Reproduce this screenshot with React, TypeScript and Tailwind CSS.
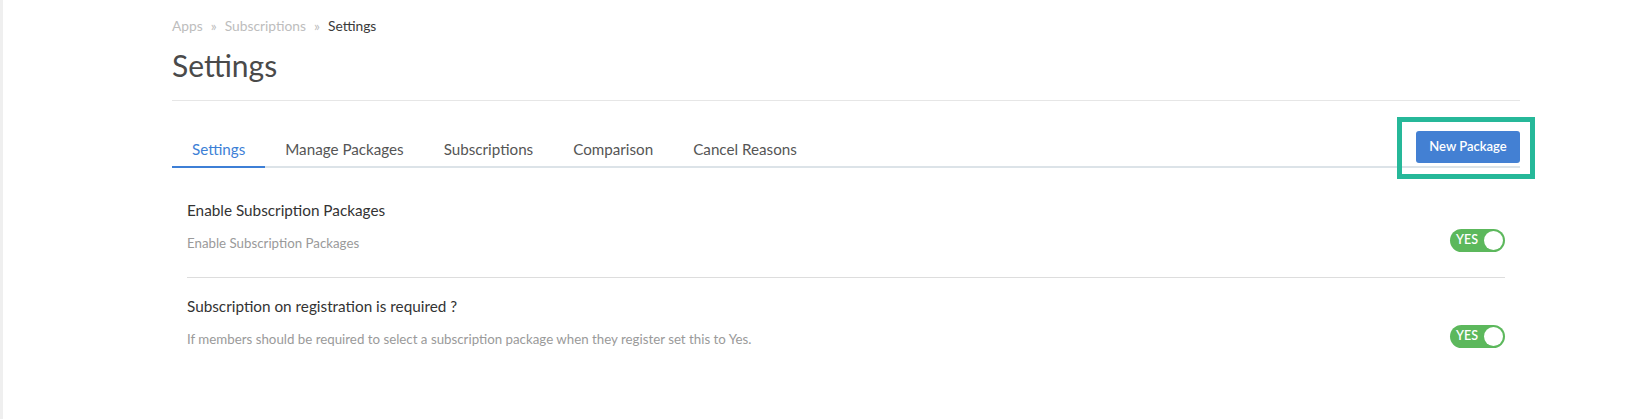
import React from 'react';

const tabs = ['Settings', 'Manage Packages', 'Subscriptions', 'Comparison', 'Cancel Reasons'];

const Toggle = () => (
  <div className="flex h-[23px] w-[55px] shrink-0 items-center justify-between rounded-full bg-[#5cb85c] pl-[6px] pr-[2px]">
    <span className="text-[12.5px] font-semibold leading-none text-white">YES</span>
    <span className="h-[19px] w-[19px] rounded-full bg-white" />
  </div>
);

const SettingRow = ({ title, desc, last }: { title: string; desc: string; last?: boolean }) => (
  <div className={last ? 'pt-[18px]' : 'border-b border-[#dddddd] pb-[25px]'}>
    <div className="text-[15.3px] leading-[20px] text-[#333333]">{title}</div>
    <div className="mt-[9px] flex items-center justify-between">
      <div className="pt-[5px] text-[13.3px] leading-[18px] text-[#9a9a9a]">{desc}</div>
      <Toggle />
    </div>
  </div>
);

export default function App() {
  return (
    <div
      className="min-h-screen border-l-[3px] border-[#efefef] bg-white"
      style={{ fontFamily: 'Lato, "Open Sans", sans-serif' }}
    >
      <div className="ml-[169px] w-[1348px] pt-[17px]">
        {/* breadcrumb */}
        <div className="flex items-center gap-[8px] text-[13.8px] leading-[18px]">
          <span className="text-[#bdbdbd]">Apps</span>
          <span className="text-[#bdbdbd]">»</span>
          <span className="text-[#bdbdbd]">Subscriptions</span>
          <span className="text-[#bdbdbd]">»</span>
          <span className="text-[#3a3a3a]">Settings</span>
        </div>

        <h1 className="mt-[12px] text-[30px] leading-[36px] text-[#4a4a4a]">Settings</h1>
        <div className="mt-[17px] border-t border-[#e6e6e6]" />

        {/* tabs */}
        <div className="mt-[30px] flex items-end justify-between border-b-2 border-[#dce3e8]">
          <div className="flex items-end">
            {tabs.map((t, i) => (
              <div
                key={t}
                className={
                  i === 0
                    ? '-mb-[2px] border-b-2 border-[#3d7fd6] px-[20px] pb-[7px] text-[15.2px] leading-[20px] text-[#3d7fd6]'
                    : 'px-[20px] pb-[7px] text-[15.2px] leading-[20px] text-[#555555]'
                }
              >
                {t}
              </div>
            ))}
          </div>
          <div className="relative mb-[3px]">
            <button className="h-[32px] w-[104px] rounded-[3px] bg-[#4380d3] text-[13px] font-semibold text-white">
              New Package
            </button>
            <div className="pointer-events-none absolute -bottom-[16px] -left-[19px] -right-[15px] -top-[14px] border-[5px] border-[#26b899]" />
          </div>
        </div>

        {/* rows */}
        <div className="px-[15px] pt-[32px]">
          <SettingRow title="Enable Subscription Packages" desc="Enable Subscription Packages" />
          <SettingRow
            title="Subscription on registration is required ?"
            desc="If members should be required to select a subscription package when they register set this to Yes."
            last
          />
        </div>
      </div>
    </div>
  );
}
